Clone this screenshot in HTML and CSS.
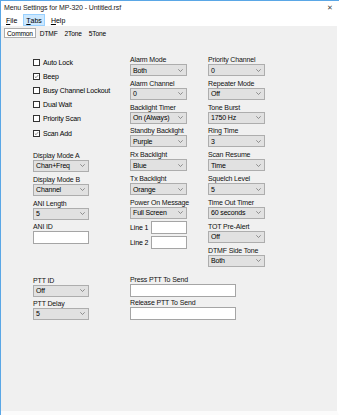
FILE: index.html
```html
<!DOCTYPE html>
<html>
<head>
<meta charset="utf-8">
<link rel="stylesheet" href="styles.css">
</head>
<body>
<div class="window">
  <div class="titlebar">
    <span class="title">Menu Settings for MP-320 - Untitled.rsf</span>
    <span class="close">✕</span>
  </div>
  <div class="menubar">
    <span class="menu"><u>F</u>ile</span>
    <span class="menu active"><u>T</u>abs</span>
    <span class="menu"><u>H</u>elp</span>
  </div>
  <div class="tabs">
    <span class="tab selected">Common</span>
    <span class="tab">DTMF</span>
    <span class="tab">2Tone</span>
    <span class="tab">5Tone</span>
  </div>
  <div class="page">
    <div class="top">
      <div class="col col1">
        <div class="checks">
          <label class="check"><span class="box"></span>Auto Lock</label>
          <label class="check"><span class="box"><svg viewBox="0 0 7 7"><polyline points="1.2,3.6 2.8,5.2 5.8,1.6"/></svg></span>Beep</label>
          <label class="check"><span class="box"></span>Busy Channel Lockout</label>
          <label class="check"><span class="box"></span>Dual Wait</label>
          <label class="check"><span class="box"></span>Priority Scan</label>
          <label class="check"><span class="box"><svg viewBox="0 0 7 7"><polyline points="1.2,3.6 2.8,5.2 5.8,1.6"/></svg></span>Scan Add</label>
        </div>
        <div class="field gap-a"><div class="lbl">Display Mode A</div><div class="select"><span>Chan+Freq</span><svg viewBox="0 0 5 3"><polyline points="0.3,0.3 2.5,2.5 4.7,0.3"/></svg></div></div>
        <div class="field"><div class="lbl">Display Mode B</div><div class="select"><span>Channel</span><svg viewBox="0 0 5 3"><polyline points="0.3,0.3 2.5,2.5 4.7,0.3"/></svg></div></div>
        <div class="field gap-ani"><div class="lbl">ANI Length</div><div class="select"><span>5</span><svg viewBox="0 0 5 3"><polyline points="0.3,0.3 2.5,2.5 4.7,0.3"/></svg></div></div>
        <div class="field gap-id"><div class="lbl">ANI ID</div><div class="input"></div></div>
      </div>
      <div class="col col2">
        <div class="field"><div class="lbl">Alarm Mode</div><div class="select"><span>Both</span><svg viewBox="0 0 5 3"><polyline points="0.3,0.3 2.5,2.5 4.7,0.3"/></svg></div></div>
        <div class="field"><div class="lbl">Alarm Channel</div><div class="select"><span>0</span><svg viewBox="0 0 5 3"><polyline points="0.3,0.3 2.5,2.5 4.7,0.3"/></svg></div></div>
        <div class="field"><div class="lbl">Backlight Timer</div><div class="select"><span>On (Always)</span><svg viewBox="0 0 5 3"><polyline points="0.3,0.3 2.5,2.5 4.7,0.3"/></svg></div></div>
        <div class="field"><div class="lbl">Standby Backlight</div><div class="select"><span>Purple</span><svg viewBox="0 0 5 3"><polyline points="0.3,0.3 2.5,2.5 4.7,0.3"/></svg></div></div>
        <div class="field"><div class="lbl">Rx Backlight</div><div class="select"><span>Blue</span><svg viewBox="0 0 5 3"><polyline points="0.3,0.3 2.5,2.5 4.7,0.3"/></svg></div></div>
        <div class="field"><div class="lbl">Tx Backlight</div><div class="select"><span>Orange</span><svg viewBox="0 0 5 3"><polyline points="0.3,0.3 2.5,2.5 4.7,0.3"/></svg></div></div>
        <div class="field"><div class="lbl">Power On Message</div><div class="select"><span>Full Screen</span><svg viewBox="0 0 5 3"><polyline points="0.3,0.3 2.5,2.5 4.7,0.3"/></svg></div></div>
        <div class="lines">
          <div class="line"><span>Line 1</span><div class="input short"></div></div>
          <div class="line"><span>Line 2</span><div class="input short"></div></div>
        </div>
      </div>
      <div class="col col3">
        <div class="field"><div class="lbl">Priority Channel</div><div class="select"><span>0</span><svg viewBox="0 0 5 3"><polyline points="0.3,0.3 2.5,2.5 4.7,0.3"/></svg></div></div>
        <div class="field"><div class="lbl">Repeater Mode</div><div class="select"><span>Off</span><svg viewBox="0 0 5 3"><polyline points="0.3,0.3 2.5,2.5 4.7,0.3"/></svg></div></div>
        <div class="field"><div class="lbl">Tone Burst</div><div class="select"><span>1750 Hz</span><svg viewBox="0 0 5 3"><polyline points="0.3,0.3 2.5,2.5 4.7,0.3"/></svg></div></div>
        <div class="field"><div class="lbl">Ring Time</div><div class="select"><span>3</span><svg viewBox="0 0 5 3"><polyline points="0.3,0.3 2.5,2.5 4.7,0.3"/></svg></div></div>
        <div class="field"><div class="lbl">Scan Resume</div><div class="select"><span>Time</span><svg viewBox="0 0 5 3"><polyline points="0.3,0.3 2.5,2.5 4.7,0.3"/></svg></div></div>
        <div class="field"><div class="lbl">Squelch Level</div><div class="select"><span>5</span><svg viewBox="0 0 5 3"><polyline points="0.3,0.3 2.5,2.5 4.7,0.3"/></svg></div></div>
        <div class="field"><div class="lbl">Time Out Timer</div><div class="select"><span>60 seconds</span><svg viewBox="0 0 5 3"><polyline points="0.3,0.3 2.5,2.5 4.7,0.3"/></svg></div></div>
        <div class="field"><div class="lbl">TOT Pre-Alert</div><div class="select"><span>Off</span><svg viewBox="0 0 5 3"><polyline points="0.3,0.3 2.5,2.5 4.7,0.3"/></svg></div></div>
        <div class="field"><div class="lbl">DTMF Side Tone</div><div class="select"><span>Both</span><svg viewBox="0 0 5 3"><polyline points="0.3,0.3 2.5,2.5 4.7,0.3"/></svg></div></div>
      </div>
    </div>
    <div class="bottom">
      <div class="col col1 pair">
        <div class="field"><div class="lbl">PTT ID</div><div class="select"><span>Off</span><svg viewBox="0 0 5 3"><polyline points="0.3,0.3 2.5,2.5 4.7,0.3"/></svg></div></div>
        <div class="field"><div class="lbl">PTT Delay</div><div class="select"><span>5</span><svg viewBox="0 0 5 3"><polyline points="0.3,0.3 2.5,2.5 4.7,0.3"/></svg></div></div>
      </div>
      <div class="col wide pair">
        <div class="field"><div class="lbl">Press PTT To Send</div><div class="input"></div></div>
        <div class="field"><div class="lbl">Release PTT To Send</div><div class="input"></div></div>
      </div>
    </div>
  </div>
</div>
</body>
</html>
```
FILE: styles.css
```css
* { box-sizing: border-box; }
html, body { margin: 0; padding: 0; }
body {
  width: 339px;
  height: 415px;
  overflow: hidden;
  background: #ffffff;
  font-family: "Liberation Sans", Arial, sans-serif;
  font-size: 7px;
  color: #000;
}
.window {
  width: 339px;
  height: 415px;
  border-left: 1px solid #5aa7e6;
  border-top: 1px solid #5aa7e6;
  display: flex;
  flex-direction: column;
  background: #fff;
}
.titlebar {
  height: 13px;
  display: flex;
  align-items: center;
  justify-content: space-between;
  padding: 0 6px 0 3px;
  background: #fff;
}
.title { font-size: 7px; color: #222; letter-spacing: -0.1px; }
.close { font-size: 7px; color: #444; }
.menubar {
  height: 12px;
  display: flex;
  align-items: stretch;
  padding-left: 2px;
  background: #fff;
}
.menu {
  display: flex;
  align-items: center;
  padding: 0 2px;
  margin-right: 3px;
  font-size: 7px;
  border: 1px solid transparent;
}
.menu.active { background: #cce8ff; border-color: #99d1ff; }
.menu u { text-decoration-thickness: 0.5px; text-underline-offset: 1px; }
.tabs {
  height: 13px;
  display: flex;
  align-items: center;
  gap: 1px;
  padding-left: 3px;
  background: #f0f0f0;
  border-right: 2px solid #fff;
}
.tab {
  padding: 0 2px;
  height: 10px;
  line-height: 9px;
  border: 1px solid transparent;
  font-size: 6.6px;
  letter-spacing: -0.15px;
}
.tab.selected { background: #fff; border-color: #adadad; }
.page {
  flex: 1;
  background: #f0f0f0;
  padding: 16px 0 0 32px;
  border-right: 2px solid #fff;
  border-bottom: 4px solid #fbfbfb;
  letter-spacing: -0.15px;
}
.top { display: flex; align-items: flex-start; }
.col { display: flex; flex-direction: column; width: 56px; }
.col2 { width: 57px; margin-left: 41px; gap: 2.83px; }
.col3 { width: 57px; margin-left: 21px; gap: 2.83px; }
.checks { display: flex; flex-direction: column; }
.check {
  height: 14.2px;
  display: flex;
  align-items: center;
  white-space: nowrap;
}
.box {
  flex: 0 0 7px;
  width: 7px;
  height: 7px;
  border: 1px solid #333;
  background: #fff;
  margin-right: 3px;
  display: flex;
}
.box svg { width: 5px; height: 5px; fill: none; stroke: #333; stroke-width: 0.8; }
.field { display: flex; flex-direction: column; }
.lbl { height: 9px; line-height: 9px; white-space: nowrap; color: #111; }
.select {
  height: 12px;
  background: #e1e1e1;
  border: 1px solid #adadad;
  display: flex;
  align-items: center;
  justify-content: space-between;
  padding: 0 3px 0 2px;
  white-space: nowrap;
}
.select svg { width: 5px; height: 3px; fill: none; stroke: #777; stroke-width: 0.8; }
.input {
  height: 13px;
  background: #fff;
  border: 1px solid #a5a5a5;
}
.gap-a { margin-top: 10.8px; }
.col1 .field + .field { margin-top: 2.83px; }
.col1 .gap-ani { margin-top: 14.2px; }
.col1 .gap-id { margin-top: 5px; }
.lines { display: flex; flex-direction: column; gap: 2px; margin-top: -0.8px; }
.line { display: flex; align-items: center; justify-content: space-between; height: 13px; }
.input.short { width: 36px; }
.bottom { display: flex; align-items: flex-start; margin-top: 9px; }
.bottom .col1 .field + .field { margin-top: 2px; }
.wide { width: 106px; margin-left: 41px; margin-top: -1px; }
.wide .field + .field { margin-top: 1px; }
```
